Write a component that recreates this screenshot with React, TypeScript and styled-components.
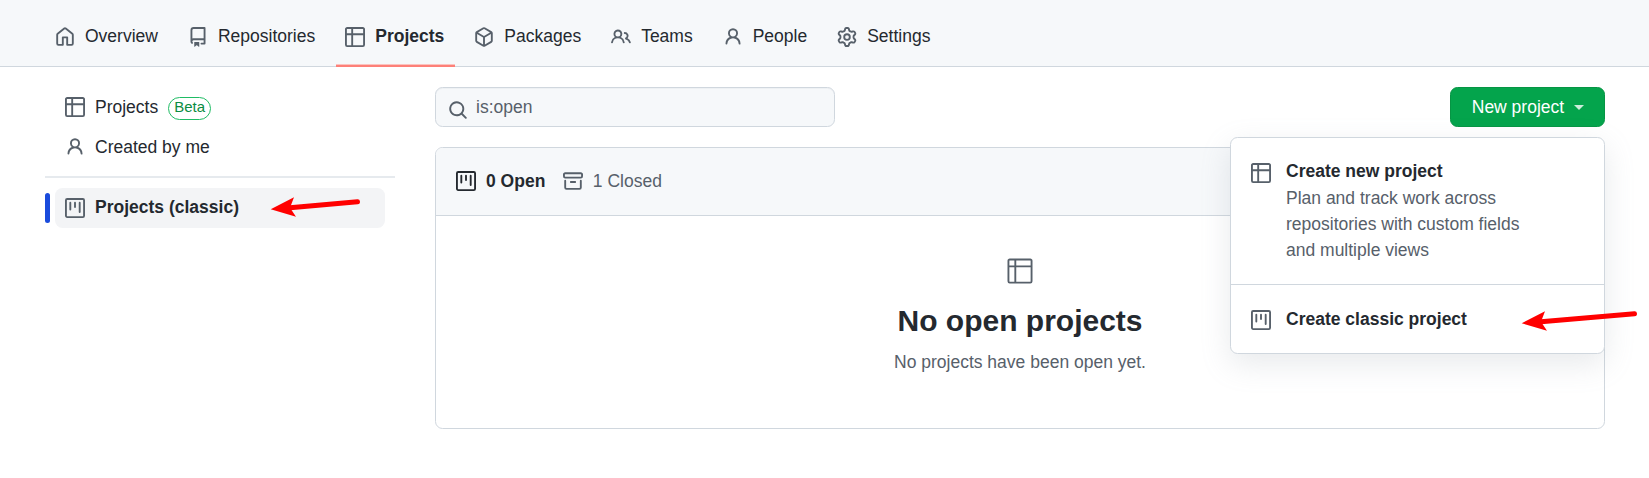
import React from "react";
import styled, { createGlobalStyle } from "styled-components";

const GlobalStyle = createGlobalStyle`
  *, *::before, *::after { box-sizing: border-box; }
  body {
    margin: 0;
    background: #fff;
    color: #24292f;
    font: 17.5px/1.5 "Liberation Sans", Arial, sans-serif;
  }
`;

const ICONS = {
  home: "M8.156 1.835a.25.25 0 00-.312 0l-5.25 4.2a.25.25 0 00-.094.196v7.019c0 .138.112.25.25.25H5.5V8.25a.75.75 0 01.75-.75h3.5a.75.75 0 01.75.75v5.25h2.75a.25.25 0 00.25-.25V6.23a.25.25 0 00-.094-.195l-5.25-4.2zM6.906.664a1.75 1.75 0 012.187 0l5.25 4.2c.415.332.657.835.657 1.367v7.019A1.75 1.75 0 0113.25 15h-3.5a.75.75 0 01-.75-.75V9H7v5.25a.75.75 0 01-.75.75h-3.5A1.75 1.75 0 011 13.25V6.23c0-.531.242-1.034.657-1.366l5.25-4.2h-.001z",
  repo: "M2 2.5A2.5 2.5 0 014.5 0h8.75a.75.75 0 01.75.75v12.5a.75.75 0 01-.75.75h-2.5a.75.75 0 110-1.5h1.75v-2h-8a1 1 0 00-.714 1.7.75.75 0 01-1.072 1.05A2.495 2.495 0 012 11.5v-9zm10.5-1V9h-8c-.356 0-.694.074-1 .208V2.5a1 1 0 011-1h8zM5 12.25v3.25a.25.25 0 00.4.2l1.45-1.087a.25.25 0 01.3 0L8.6 15.7a.25.25 0 00.4-.2v-3.25a.25.25 0 00-.25-.25h-3.5a.25.25 0 00-.25.25z",
  table: "M0 1.75C0 .784.784 0 1.75 0h12.5C15.216 0 16 .784 16 1.75v12.5A1.75 1.75 0 0114.25 16H1.75A1.75 1.75 0 010 14.25V1.75zM1.5 6.5v7.75c0 .138.112.25.25.25H5v-8H1.5zM5 5H1.5V1.75a.25.25 0 01.25-.25H5V5zm1.5 1.5v8h7.75a.25.25 0 00.25-.25V6.5h-8zm8-1.5h-8V1.5h7.75a.25.25 0 01.25.25V5z",
  package: "M8.878.392a1.75 1.75 0 00-1.756 0l-5.25 3.045A1.75 1.75 0 001 4.951v6.098c0 .624.332 1.2.872 1.514l5.25 3.045a1.75 1.75 0 001.756 0l5.25-3.045c.54-.313.872-.89.872-1.514V4.951c0-.624-.332-1.2-.872-1.514L8.878.392zM7.875 1.69a.25.25 0 01.25 0l4.63 2.685L8 7.133 3.245 4.375l4.63-2.685zM2.5 5.677v5.372c0 .09.047.171.125.216l4.625 2.683V8.432L2.5 5.677zm6.25 8.271l4.625-2.683a.25.25 0 00.125-.216V5.677L8.75 8.432v5.516z",
  people: "M5.5 3.5a2 2 0 100 4 2 2 0 000-4zM2 5.5a3.5 3.5 0 115.898 2.549 5.507 5.507 0 013.034 4.084.75.75 0 11-1.482.235 4.001 4.001 0 00-7.9 0 .75.75 0 01-1.482-.236A5.507 5.507 0 013.102 8.05 3.49 3.49 0 012 5.5zM11 4a.75.75 0 100 1.5 1.5 1.5 0 01.666 2.844.75.75 0 00-.416.672v.352a.75.75 0 00.574.73c1.2.289 2.162 1.2 2.522 2.372a.75.75 0 101.434-.44 5.01 5.01 0 00-2.56-3.012A3 3 0 0011 4z",
  person: "M10.5 5a2.5 2.5 0 11-5 0 2.5 2.5 0 015 0zm.061 3.073a4 4 0 10-5.123 0 6.004 6.004 0 00-3.431 5.142.75.75 0 001.498.07 4.5 4.5 0 018.99 0 .75.75 0 101.498-.07 6.005 6.005 0 00-3.432-5.142z",
  gear: "M7.429 1.525a6.593 6.593 0 011.142 0c.036.003.108.036.137.146l.289 1.105c.147.56.55.967.997 1.189.174.086.341.183.501.29.417.278.97.423 1.53.27l1.102-.303c.11-.03.175.016.195.046.219.31.41.641.573.989.014.031.022.11-.059.19l-.815.806c-.411.406-.562.957-.53 1.456a4.588 4.588 0 010 .582c-.032.499.119 1.05.53 1.456l.815.806c.08.08.073.159.059.19a6.494 6.494 0 01-.573.99c-.02.029-.086.074-.195.045l-1.103-.303c-.559-.153-1.112-.008-1.529.27-.16.107-.327.204-.5.29-.449.222-.851.628-.998 1.189l-.289 1.105c-.029.11-.101.143-.137.146a6.613 6.613 0 01-1.142 0c-.036-.003-.108-.037-.137-.146l-.289-1.105c-.147-.56-.55-.967-.997-1.189a4.502 4.502 0 01-.501-.29c-.417-.278-.97-.423-1.53-.27l-1.102.303c-.11.03-.175-.016-.195-.046a6.492 6.492 0 01-.573-.989c-.014-.031-.022-.11.059-.19l.815-.806c.411-.406.562-.957.53-1.456a4.587 4.587 0 010-.582c.032-.499-.119-1.05-.53-1.456l-.815-.806c-.08-.08-.073-.159-.059-.19a6.44 6.44 0 01.573-.99c.02-.029.086-.075.195-.045l1.103.303c.559.153 1.112.008 1.529-.27.16-.107.327-.204.5-.29.449-.222.851-.628.998-1.189l.289-1.105c.029-.11.101-.143.137-.146zM8 0c-.236 0-.47.01-.701.03-.743.065-1.29.615-1.458 1.261l-.29 1.106c-.017.066-.078.158-.211.224a5.994 5.994 0 00-.668.386c-.123.082-.233.09-.3.071L3.27 2.776c-.644-.177-1.392.02-1.82.63a7.977 7.977 0 00-.704 1.217c-.315.675-.111 1.422.363 1.891l.815.806c.05.048.098.147.088.294a6.084 6.084 0 000 .772c.01.147-.038.246-.088.294l-.815.806c-.474.469-.678 1.216-.363 1.891.2.428.436.835.704 1.218.428.609 1.176.806 1.82.63l1.103-.303c.066-.019.176-.011.299.071.213.143.436.272.668.386.133.066.194.158.212.224l.289 1.106c.169.646.715 1.196 1.458 1.26a8.094 8.094 0 001.402 0c.743-.064 1.29-.614 1.458-1.26l.29-1.106c.017-.066.078-.158.211-.224a5.98 5.98 0 00.668-.386c.123-.082.233-.09.3-.071l1.102.302c.644.177 1.392-.02 1.82-.63.268-.382.505-.789.704-1.217.315-.675.111-1.422-.364-1.891l-.814-.806c-.05-.048-.098-.147-.088-.294a6.1 6.1 0 000-.772c-.01-.147.039-.246.088-.294l.814-.806c.475-.469.679-1.216.364-1.891a7.992 7.992 0 00-.704-1.218c-.428-.609-1.176-.806-1.82-.63l-1.103.303c-.066.019-.176.011-.299-.071a5.991 5.991 0 00-.668-.386c-.133-.066-.194-.158-.212-.224L10.16 1.29C9.99.645 9.444.095 8.701.031A8.094 8.094 0 008 0zm1.5 8a1.5 1.5 0 11-3 0 1.5 1.5 0 013 0zM11 8a3 3 0 11-6 0 3 3 0 016 0z",
  project: "M1.75 0A1.75 1.75 0 000 1.75v12.5C0 15.216.784 16 1.75 16h12.5A1.75 1.75 0 0016 14.25V1.75A1.75 1.75 0 0014.25 0H1.75zM1.5 1.75a.25.25 0 01.25-.25h12.5a.25.25 0 01.25.25v12.5a.25.25 0 01-.25.25H1.75a.25.25 0 01-.25-.25V1.75zM11.75 3a.75.75 0 00-.75.75v7.5a.75.75 0 001.5 0v-7.5a.75.75 0 00-.75-.75zm-8.25.75a.75.75 0 011.5 0v5.5a.75.75 0 01-1.5 0v-5.5zM8 3a.75.75 0 00-.75.75v3.5a.75.75 0 001.5 0v-3.5A.75.75 0 008 3z",
  archive: "M1.75 2.5a.25.25 0 00-.25.25v1.5c0 .138.112.25.25.25h12.5a.25.25 0 00.25-.25v-1.5a.25.25 0 00-.25-.25H1.75zM0 2.75C0 1.784.784 1 1.75 1h12.5c.966 0 1.75.784 1.75 1.75v1.5A1.75 1.75 0 0114.25 6H1.75A1.75 1.75 0 010 4.25v-1.5zM1.75 7a.75.75 0 01.75.75v5.5c0 .138.112.25.25.25h10.5a.25.25 0 00.25-.25v-5.5a.75.75 0 011.5 0v5.5A1.75 1.75 0 0113.25 15H2.75A1.75 1.75 0 011 13.25v-5.5A.75.75 0 011.75 7zm4.5 1a.75.75 0 000 1.5h3.5a.75.75 0 100-1.5h-3.5z",
  search: "M11.5 7a4.499 4.499 0 11-8.998 0A4.499 4.499 0 0111.5 7zm-.82 4.74a6 6 0 111.06-1.06l3.04 3.04a.75.75 0 11-1.06 1.06l-3.04-3.04z",
} as const;

type IconName = keyof typeof ICONS;

const IconSvg = styled.svg<{ $dark?: boolean }>`
  flex: none;
  display: block;
  width: 20px;
  height: 20px;
  fill: ${(p) => (p.$dark ? "#24292f" : "#57606a")};
`;

const Icon = ({ name, dark }: { name: IconName; dark?: boolean }) => (
  <IconSvg viewBox="0 0 16 16" $dark={dark} aria-hidden>
    <path fillRule="evenodd" d={ICONS[name]} />
  </IconSvg>
);

const Header = styled.header`
  height: 67px;
  padding: 0 45px;
  background: #f6f8fa;
  box-shadow: inset 0 -1px 0 #d0d7de;
`;

const Nav = styled.nav`
  display: flex;
  gap: 10px;
  height: 100%;
`;

const Tab = styled.a<{ $active?: boolean }>`
  display: flex;
  align-items: center;
  gap: 10px;
  margin: ${(p) => (p.$active ? "0 -0.5px 0 0.5px" : "0")};
  padding: ${(p) => (p.$active ? "9px 10px 0 9.5px" : "9px 10px 0")};
  white-space: nowrap;
  font-weight: ${(p) => (p.$active ? 700 : 400)};
  border-bottom: 2px solid ${(p) => (p.$active ? "#fd8078" : "transparent")};
  box-shadow: ${(p) => (p.$active ? "inset 0 -1px 0 #fbc3bf" : "none")};
`;

const TabLabel = styled.span<{ $active?: boolean }>`
  padding-bottom: 2px;
  padding-right: ${(p) => (p.$active ? "0.5px" : "0")};
`;

const Body = styled.div`
  display: flex;
  gap: 40px;
  padding: 20px 44px 0 45px;
`;

const Sidebar = styled.aside`
  width: 350px;
  flex: none;
`;

const SideItem = styled.a<{ $active?: boolean }>`
  display: flex;
  align-items: center;
  gap: 10px;
  height: 40px;
  flex: 1;
  margin: 0 10px;
  padding: 0 10px;
  border-radius: 7.5px;
  font-weight: ${(p) => (p.$active ? 700 : 400)};
  background: ${(p) => (p.$active ? "#f3f4f6" : "transparent")};
`;

const SideLabel = styled.span<{ $raised?: boolean }>`
  padding-bottom: ${(p) => (p.$raised ? "1px" : "0")};
`;

const ActiveRow = styled.div`
  display: flex;
  align-items: center;
`;

const ActiveBar = styled.div`
  width: 5px;
  height: 30px;
  margin-right: -5px;
  border-radius: 2.5px;
  background: #1a4bdc;
`;

const Divider = styled.hr`
  height: 2px;
  margin: 9px 0 10px;
  border: 0;
  background: #e6eaee;
`;

const Beta = styled.span`
  display: flex;
  align-items: center;
  height: 23px;
  margin-top: 2px;
  padding: 0 5px 3px;
  border: 1px solid #1fbc64;
  border-radius: 12px;
  color: #0a8c42;
  font-size: 15px;
  line-height: 1;
`;

const Main = styled.main`
  flex: 1;
`;

const Toolbar = styled.div`
  position: relative;
  display: flex;
  justify-content: space-between;
  height: 40px;
`;

const SearchBox = styled.div`
  display: flex;
  align-items: center;
  gap: 8px;
  width: 400px;
  padding: 0 12px;
  border: 1px solid #d0d7de;
  border-radius: 7.5px;
  background: #f6f8fa;
  box-shadow: inset 0 1px 0 rgba(208, 215, 222, 0.2);
  color: #57606a;
`;

const SearchIcon = styled.span`
  padding-top: 5px;
`;

const NewButton = styled.button`
  display: flex;
  align-items: center;
  justify-content: space-between;
  width: 155px;
  padding: 0 20px 0 20.75px;
  border: 1px solid #069544;
  border-radius: 7.5px;
  background: #04a44c;
  color: #fff;
  font: inherit;
`;

const Caret = styled.span`
  border: 5px solid transparent;
  border-top-color: rgba(255, 255, 255, 0.8);
  border-bottom: 0;
`;

const Menu = styled.div`
  position: absolute;
  z-index: 2;
  top: 50px;
  right: 0;
  width: 375px;
  border: 1px solid #d0d7de;
  border-radius: 7.5px;
  background: #fff;
  box-shadow: 0 10px 30px rgba(140, 149, 159, 0.2);
`;

const MenuItem = styled.div<{ $divided?: boolean }>`
  display: flex;
  gap: 15px;
  height: ${(p) => (p.$divided ? "147px" : "68px")};
  padding: ${(p) => (p.$divided ? "20px" : "21px")} 20px 0;
  border-bottom: ${(p) => (p.$divided ? "1px solid #d0d7de" : "0")};
`;

const MenuIcon = styled.span<{ $offset: number }>`
  padding-top: ${(p) => p.$offset}px;
`;

const MenuTitle = styled.div`
  font-weight: 700;
  line-height: 27px;
`;

const MenuText = styled.div`
  color: #57606a;
  line-height: 26px;
`;

const Card = styled.section`
  height: 282px;
  margin-top: 20px;
  border: 1px solid #d0d7de;
  border-radius: 7.5px;
  overflow: hidden;
`;

const CardHeader = styled.div`
  display: flex;
  align-items: flex-start;
  gap: 17.5px;
  height: 68px;
  padding: 20px 20px 0;
  background: #f6f8fa;
  border-bottom: 1px solid #d0d7de;
`;

const Filter = styled.span<{ $active?: boolean }>`
  display: flex;
  align-items: center;
  gap: 10px;
  font-weight: ${(p) => (p.$active ? 700 : 400)};
  color: ${(p) => (p.$active ? "#24292f" : "#57606a")};
  line-height: 27px;

  svg {
    margin-bottom: 1px;
  }
`;

const Blank = styled.div`
  display: flex;
  flex-direction: column;
  align-items: center;
  padding-top: 40px;
`;

const BlankIcon = styled.svg`
  width: 30px;
  height: 30px;
  fill: #57606a;
`;

const BlankTitle = styled.h3`
  margin: 12px 0 0;
  font-size: 30px;
  line-height: 45px;
`;

const BlankText = styled.p`
  margin: 6px 0 0;
  color: #57606a;
`;

const ArrowSvg = styled.svg<{ $x: number; $y: number }>`
  position: absolute;
  z-index: 3;
  left: ${(p) => p.$x}px;
  top: ${(p) => p.$y}px;
  overflow: visible;
  pointer-events: none;
`;

const tabs: { icon: IconName; label: string; active?: boolean }[] = [
  { icon: "home", label: "Overview" },
  { icon: "repo", label: "Repositories" },
  { icon: "table", label: "Projects", active: true },
  { icon: "package", label: "Packages" },
  { icon: "people", label: "Teams" },
  { icon: "person", label: "People" },
  { icon: "gear", label: "Settings" },
];

export default function App() {
  return (
    <>
      <GlobalStyle />
      <Header>
        <Nav>
          {tabs.map((t) => (
            <Tab key={t.label} $active={t.active}>
              <Icon name={t.icon} />
              <TabLabel $active={t.active}>{t.label}</TabLabel>
            </Tab>
          ))}
        </Nav>
      </Header>
      <Body>
        <Sidebar>
          <SideItem>
            <Icon name="table" />
            <SideLabel>Projects</SideLabel>
            <Beta>Beta</Beta>
          </SideItem>
          <SideItem>
            <Icon name="person" />
            <SideLabel>Created by me</SideLabel>
          </SideItem>
          <Divider />
          <ActiveRow>
            <ActiveBar />
            <SideItem $active>
              <Icon name="project" />
              <SideLabel $raised>Projects (classic)</SideLabel>
            </SideItem>
          </ActiveRow>
        </Sidebar>
        <Main>
          <Toolbar>
            <SearchBox>
              <SearchIcon>
                <Icon name="search" />
              </SearchIcon>
              <SideLabel>is:open</SideLabel>
            </SearchBox>
            <NewButton>
              <SideLabel>New project</SideLabel>
              <Caret />
            </NewButton>
            <Menu>
              <MenuItem $divided>
                <MenuIcon $offset={5}>
                  <Icon name="table" />
                </MenuIcon>
                <div>
                  <MenuTitle>Create new project</MenuTitle>
                  <MenuText>
                    Plan and track work across
                    <br />
                    repositories with custom fields
                    <br />
                    and multiple views
                  </MenuText>
                </div>
              </MenuItem>
              <MenuItem>
                <MenuIcon $offset={4}>
                  <Icon name="project" />
                </MenuIcon>
                <MenuTitle>Create classic project</MenuTitle>
              </MenuItem>
            </Menu>
          </Toolbar>
          <Card>
            <CardHeader>
              <Filter $active>
                <Icon name="project" dark />0 Open
              </Filter>
              <Filter>
                <Icon name="archive" />1 Closed
              </Filter>
            </CardHeader>
            <Blank>
              <BlankIcon viewBox="0 0 24 24" aria-hidden>
                <path
                  fillRule="evenodd"
                  d="M2 3.75C2 2.784 2.784 2 3.75 2h16.5c.966 0 1.75.784 1.75 1.75v16.5A1.75 1.75 0 0120.25 22H3.75A1.75 1.75 0 012 20.25V3.75zM3.5 9v11.25c0 .138.112.25.25.25H7.5V9h-4zm4-1.5h-4V3.75a.25.25 0 01.25-.25H7.5v4zM9 9v11.5h11.25a.25.25 0 00.25-.25V9H9zm11.5-1.5H9v-4h11.25a.25.25 0 01.25.25V7.5z"
                />
              </BlankIcon>
              <BlankTitle>No open projects</BlankTitle>
              <BlankText>No projects have been open yet.</BlankText>
            </Blank>
          </Card>
        </Main>
      </Body>
      <ArrowSvg $x={270} $y={195} width="92" height="24">
        <path d="M87.5 6.7L20 12.8" stroke="#f00" strokeWidth="5" strokeLinecap="round" />
        <path d="M.7 14.3L24 2.3 20 12.8 26 21.7z" fill="#f00" />
      </ArrowSvg>
      <ArrowSvg $x={1521} $y={309} width="118" height="24">
        <path d="M113.5 4.7L20 12.8" stroke="#f00" strokeWidth="5" strokeLinecap="round" />
        <path d="M.7 14.3L24 2.3 20 12.8 26 21.7z" fill="#f00" />
      </ArrowSvg>
    </>
  );
}
